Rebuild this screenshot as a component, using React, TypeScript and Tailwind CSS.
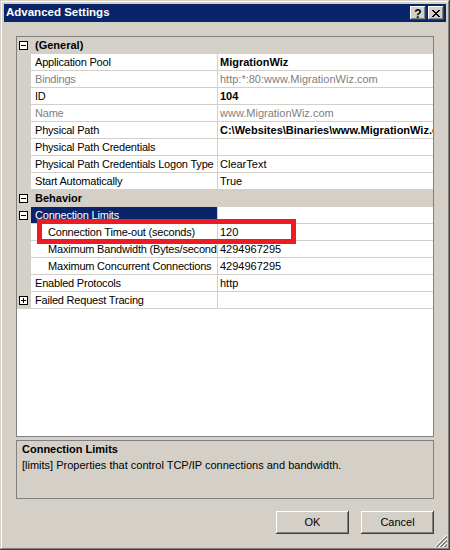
import React from 'react'

type Row = {
  label: string
  value?: string
  cat?: boolean
  bold?: boolean
  disabled?: boolean
  indent?: boolean
  expand?: 'minus' | 'plus'
  selected?: boolean
}

const rows: Row[] = [
  { label: '(General)', cat: true, expand: 'minus' },
  { label: 'Application Pool', value: 'MigrationWiz', bold: true },
  { label: 'Bindings', value: 'http:*:80:www.MigrationWiz.com', disabled: true },
  { label: 'ID', value: '104', bold: true },
  { label: 'Name', value: 'www.MigrationWiz.com', disabled: true },
  { label: 'Physical Path', value: 'C:\\Websites\\Binaries\\www.MigrationWiz.com', bold: true },
  { label: 'Physical Path Credentials', value: '' },
  { label: 'Physical Path Credentials Logon Type', value: 'ClearText' },
  { label: 'Start Automatically', value: 'True' },
  { label: 'Behavior', cat: true, expand: 'minus' },
  { label: 'Connection Limits', expand: 'minus', selected: true },
  { label: 'Connection Time-out (seconds)', value: '120', indent: true },
  { label: 'Maximum Bandwidth (Bytes/second)', value: '4294967295', indent: true },
  { label: 'Maximum Concurrent Connections', value: '4294967295', indent: true },
  { label: 'Enabled Protocols', value: 'http' },
  { label: 'Failed Request Tracing', expand: 'plus' },
]

function ExpandBox({ kind }: { kind: 'minus' | 'plus' }) {
  return (
    <svg width="9" height="9" viewBox="0 0 9 9" className="block" shapeRendering="crispEdges">
      <rect x="0.5" y="0.5" width="8" height="8" fill="#fff" stroke="#000" />
      <rect x="2" y="4" width="5" height="1" fill="#000" />
      {kind === 'plus' && <rect x="4" y="2" width="1" height="5" fill="#000" />}
    </svg>
  )
}

function GridRow({ row }: { row: Row }) {
  const margin = (
    <div className="w-[14px] h-full bg-[#d4d0c8] flex items-center pl-[2px] shrink-0">
      {row.expand && <ExpandBox kind={row.expand} />}
    </div>
  )

  if (row.cat) {
    return (
      <div className="flex h-[17px] bg-[#d4d0c8]">
        {margin}
        <div className="flex items-center pl-[4px] font-bold">{row.label}</div>
      </div>
    )
  }

  const tone = row.disabled ? 'text-[#808080]' : 'text-black'
  return (
    <div className="flex h-[17px]">
      {margin}
      <div
        className={`w-[187px] shrink-0 h-full flex items-center border-b border-r border-[#d4d0c8] overflow-hidden whitespace-nowrap tracking-[-0.2px] ${
          row.indent ? 'pl-[17px]' : 'pl-[4px]'
        } ${row.selected ? 'bg-[#0a246a] text-white' : tone}`}
      >
        {row.label}
      </div>
      <div
        className={`flex-1 min-w-0 h-full flex items-center pl-[2px] border-b border-[#d4d0c8] overflow-hidden whitespace-nowrap ${tone} ${
          row.bold ? 'font-bold' : ''
        }`}
      >
        {row.value}
      </div>
    </div>
  )
}

const raised =
  'shadow-[inset_-1px_-1px_0_#404040,inset_1px_1px_0_#ffffff,inset_-2px_-2px_0_#808080,inset_2px_2px_0_#d4d0c8]'

function CaptionButton({ children }: { children: React.ReactNode }) {
  return (
    <div className={`w-[16px] h-[14px] bg-[#d4d0c8] flex items-center justify-center ${raised}`}>
      {children}
    </div>
  )
}

export default function App() {
  return (
    <div className="w-[450px] h-[550px] relative bg-[#d4d0c8] p-[4px] flex flex-col font-['Liberation_Sans',Arial,sans-serif] text-[11px] text-black shadow-[inset_-1px_-1px_0_#404040,inset_1px_1px_0_#d4d0c8,inset_-2px_-2px_0_#808080,inset_2px_2px_0_#ffffff]">
      {/* title bar */}
      <div className="h-[18px] bg-[#0a246a] flex items-center pl-[2px] pr-[2px]">
        <span className="text-white font-bold text-[11.5px] flex-1">Advanced Settings</span>
        <div className="flex gap-[2px]">
          <CaptionButton>
            <span className="font-bold text-[12px] leading-none mt-[1px]">?</span>
          </CaptionButton>
          <CaptionButton>
            <svg width="8" height="7" viewBox="0 0 8 7" shapeRendering="crispEdges">
              <path d="M0 0h2v1h-2zM6 0h2v1h-2zM1 1h2v1h-2zM5 1h2v1h-2zM2 2h4v1h-4zM3 3h2v1h-2zM2 4h4v1h-4zM1 5h2v1h-2zM5 5h2v1h-2zM0 6h2v1h-2zM6 6h2v1h-2z" fill="#000" />
            </svg>
          </CaptionButton>
        </div>
      </div>

      {/* property grid */}
      <div className="mx-[12px] mt-[14px] h-[401px] border border-[#808080] bg-white flex flex-col relative">
        {rows.map((r, i) => (
          <GridRow key={i} row={r} />
        ))}
        {/* highlight box */}
        <div className="absolute left-[20px] top-[182px] w-[259px] h-[25px] border-[5px] border-[#ec1c24]" />
      </div>

      {/* description */}
      <div className="mx-[12px] mt-[3px] h-[59px] border border-[#808080] px-[5px] leading-[16px]">
        <div className="font-bold">Connection Limits</div>
        <div>[limits] Properties that control TCP/IP connections and bandwidth.</div>
      </div>

      {/* buttons */}
      <div className="mx-[12px] mt-[12px] flex justify-end gap-[12px]">
        <button className={`w-[73px] h-[23px] bg-[#d4d0c8] ${raised}`}>OK</button>
        <button className={`w-[73px] h-[23px] bg-[#d4d0c8] ${raised}`}>Cancel</button>
      </div>

      {/* size grip */}
      <svg
        width="12"
        height="12"
        viewBox="0 0 12 12"
        className="absolute right-[3px] bottom-[3px]"
        shapeRendering="crispEdges"
      >
        {[0, 4, 8].map((o) => (
          <g key={o}>
            <line x1={12} y1={o} x2={o} y2={12} stroke="#ffffff" />
            <line x1={12} y1={o + 1} x2={o + 1} y2={12} stroke="#808080" />
            <line x1={12} y1={o + 2} x2={o + 2} y2={12} stroke="#808080" />
          </g>
        ))}
      </svg>
    </div>
  )
}
